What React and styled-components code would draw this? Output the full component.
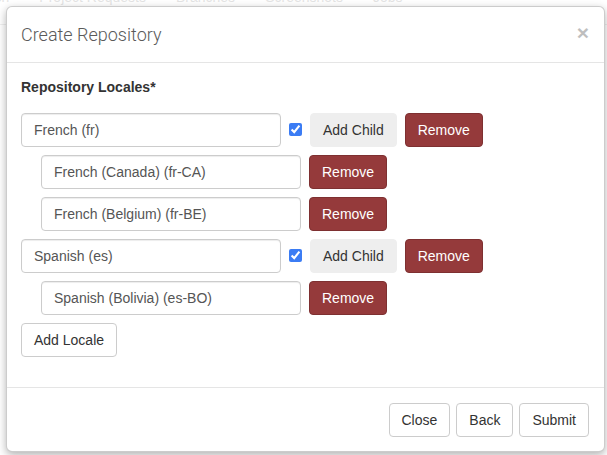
import React from "react";
import styled, { createGlobalStyle } from "styled-components";

const Global = createGlobalStyle`
  html, body { margin: 0; padding: 0; background: #fff; }
  body {
    font-family: "Liberation Sans", Arial, Helvetica, sans-serif;
    font-size: 14px;
    line-height: 1.42857;
    color: #333;
    width: 607px;
    height: 455px;
    overflow: hidden;
  }
  * { box-sizing: border-box; }
`;

const Page = styled.div`
  position: relative;
  width: 607px;
  height: 455px;
  overflow: hidden;
`;

const Nav = styled.nav`
  display: flex;
  align-items: flex-start;
  height: 38px;
  margin-top: -13px;
  border-bottom: 1px solid #e8e8e8;
  color: #d9d9d9;
  line-height: 20px;
`;

const NavLink = styled.span`
  padding: 0 15px;
  white-space: nowrap;
  &:first-child { margin-left: -50px; }
`;

const Backdrop = styled.div`
  position: absolute;
  inset: 0;
  background: rgba(255, 255, 255, 0.3);
`;

const Modal = styled.div`
  position: absolute;
  top: 6px;
  left: 6px;
  width: 599px;
  background: #fff;
  border: 1px solid rgba(0, 0, 0, 0.2);
  border-radius: 6px;
  box-shadow: 0 3px 9px rgba(0, 0, 0, 0.3);
`;

const Header = styled.div`
  display: flex;
  align-items: center;
  justify-content: space-between;
  padding: 15px 15px 15px 14px;
  border-bottom: 1px solid #e5e5e5;
`;

const Title = styled.h4`
  margin: 0;
  font-family: "Roboto", "Liberation Sans", sans-serif;
  font-weight: 300;
  font-size: 18px;
  line-height: 25px;
  color: #5a5a5a;
`;

const CloseX = styled.button`
  border: 0;
  background: none;
  padding: 0;
  margin-top: -4px;
  font-family: "Liberation Sans", Arial, sans-serif;
  font-size: 21px;
  font-weight: 700;
  line-height: 1;
  color: #000;
  opacity: 0.25;
  cursor: pointer;
`;

const Body = styled.div`
  padding: 15px 15px 30px 14px;
`;

const Label = styled.label`
  display: block;
  font-weight: 700;
  margin-bottom: 15px;
`;

const Row = styled.div`
  display: flex;
  align-items: center;
  gap: 8px;
  margin-bottom: 8px;
  padding-left: ${(p) => (p.$child ? "20px" : "0")};
`;

const Input = styled.input`
  width: 260px;
  height: 34px;
  padding: 6px 12px;
  font-family: inherit;
  font-size: 14px;
  color: #555;
  background: #fff;
  border: 1px solid #ccc;
  border-radius: 4px;
  box-shadow: inset 0 1px 1px rgba(0, 0, 0, 0.075);
  outline: none;
`;

const Check = styled.input`
  width: 13px;
  height: 13px;
  margin: 0;
  accent-color: #3b7cf4;
`;

const Btn = styled.button`
  height: 34px;
  padding: 6px 12px;
  font-family: inherit;
  font-size: 14px;
  line-height: 20px;
  border-radius: 4px;
  cursor: pointer;
  white-space: nowrap;
  ${(p) =>
    p.$variant === "danger"
      ? `background: #953a3b; border: 1px solid #7e3031; color: #fff;`
      : p.$variant === "light"
      ? `background: #eeeeee; border: 1px solid #eeeeee; color: #333;`
      : `background: #fff; border: 1px solid #ccc; color: #333;`}
`;

const Footer = styled.div`
  display: flex;
  justify-content: flex-end;
  gap: 6px;
  padding: 15px 15px 14px 15px;
  border-top: 1px solid #e5e5e5;
`;

const locales = [
  { name: "French (fr)", children: ["French (Canada) (fr-CA)", "French (Belgium) (fr-BE)"] },
  { name: "Spanish (es)", children: ["Spanish (Bolivia) (es-BO)"] },
];

export default function App() {
  return (
    <>
      <Global />
      <Page>
        <Nav>
          <NavLink>Search</NavLink>
          <NavLink>Project Requests</NavLink>
          <NavLink>Branches</NavLink>
          <NavLink>Screenshots</NavLink>
          <NavLink>Jobs</NavLink>
        </Nav>
        <Backdrop />
        <Modal>
          <Header>
            <Title>Create Repository</Title>
            <CloseX aria-label="Close">×</CloseX>
          </Header>
          <Body>
            <Label>Repository Locales*</Label>
            {locales.map((l) => (
              <React.Fragment key={l.name}>
                <Row>
                  <Input defaultValue={l.name} />
                  <Check type="checkbox" defaultChecked />
                  <Btn $variant="light">Add Child</Btn>
                  <Btn $variant="danger">Remove</Btn>
                </Row>
                {l.children.map((c) => (
                  <Row $child key={c}>
                    <Input defaultValue={c} />
                    <Btn $variant="danger">Remove</Btn>
                  </Row>
                ))}
              </React.Fragment>
            ))}
            <Btn>Add Locale</Btn>
          </Body>
          <Footer>
            <Btn>Close</Btn>
            <Btn>Back</Btn>
            <Btn>Submit</Btn>
          </Footer>
        </Modal>
      </Page>
    </>
  );
}
